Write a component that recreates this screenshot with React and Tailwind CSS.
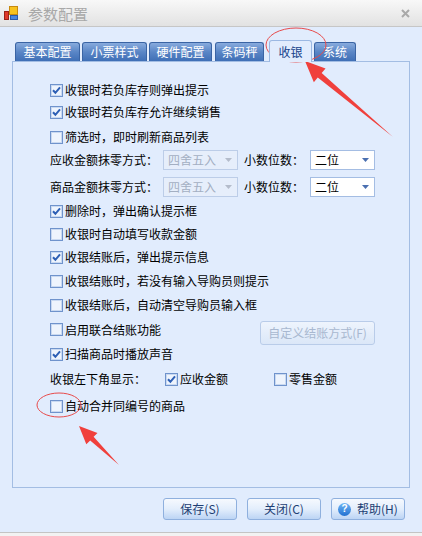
import React from "react";

function Box({ checked }) {
  return (
    <svg width="13" height="13" viewBox="0 0 13 13" className="shrink-0">
      <rect x="0.5" y="0.5" width="12" height="12" fill="#ffffff" stroke="#6f93cc" />
      <rect x="1.5" y="1.5" width="10" height="10" fill="#eef4fd" stroke="#c9d9f1" />
      {checked && (
        <path d="M3 6.2 L5.4 8.8 L10 3.4" fill="none" stroke="#2d5fb5" strokeWidth="2" />
      )}
    </svg>
  );
}

function CheckRow({ checked, children, className = "" }) {
  return (
    <div className={"flex items-center h-[20px] " + className}>
      <Box checked={checked} />
      <span className="ml-[2px] leading-[14px] text-black">{children}</span>
    </div>
  );
}

function Arrow({ color }) {
  return (
    <svg width="7" height="4" viewBox="0 0 7 4">
      <path d="M0 0 H7 L3.5 4 Z" fill={color} />
    </svg>
  );
}

function Tab({ children, w, ml, selected }) {
  if (selected) {
    return (
      <div
        className={`${w} ${ml} h-[22px] relative z-10 flex items-center justify-center rounded-t-[3px] border border-b-0 border-[#9bb8e3] bg-[#e1ecfd] text-[#15428b] pt-[1px]`}
      >
        {children}
      </div>
    );
  }
  return (
    <div
      className={`${w} ${ml} h-[19px] mb-[1px] flex items-center justify-center rounded-t-[3px] border border-b-0 border-[#3a64a4] bg-gradient-to-b from-[#88abdd] via-[#5a86c6] to-[#3f6fb6] text-white`}
    >
      {children}
    </div>
  );
}

function Btn({ children, icon }) {
  return (
    <div className="w-[74px] h-[22px] rounded-[3px] border border-[#8fb0de] bg-gradient-to-b from-[#f6f9fe] via-[#e3eefc] to-[#bcd4f4] flex items-center justify-center text-[#1e3f73] leading-[14px]">
      {icon && (
        <span className="w-[13px] h-[13px] mr-[6px] rounded-full bg-gradient-to-b from-[#6fb6f5] to-[#1f6fd0] text-white text-[10px] font-bold flex items-center justify-center leading-none font-['Liberation_Sans',sans-serif]">
          ?
        </span>
      )}
      {children}
    </div>
  );
}

export default function App() {
  return (
    <div className="w-[422px] h-[536px] relative overflow-hidden bg-[#e1ecfd] text-[12px] font-['Noto_Sans_CJK_SC',sans-serif]">
      {/* title bar */}
      <div className="h-[27px] flex items-center border-b border-[#c6c6c6] bg-gradient-to-b from-[#f8f8f8] to-[#e2e2e2]">
        <svg width="16" height="16" viewBox="0 0 16 16" className="ml-[3px]">
          <rect x="6.5" y="1.5" width="8" height="8" fill="#f7c21e" stroke="#c78a10" />
          <rect x="1.5" y="6.5" width="4" height="8" fill="#e03a2a" stroke="#9a2218" />
          <rect x="7.5" y="10.5" width="7" height="4" fill="#4a86e0" stroke="#2b5aa8" />
        </svg>
        <span className="ml-[9px] text-[15px] text-[#a8a8a8] leading-none">参数配置</span>
        <svg width="9" height="9" viewBox="0 0 9 9" className="ml-auto mr-[12px]">
          <path d="M1 1 L8 8 M8 1 L1 8" stroke="#a9a9a9" strokeWidth="2" />
        </svg>
      </div>

      {/* tabs */}
      <div className="h-[35px] flex items-end pl-[15px]">
        <Tab w="w-[65px]" ml="ml-0">基本配置</Tab>
        <Tab w="w-[65px]" ml="ml-[2px]">小票样式</Tab>
        <Tab w="w-[63px]" ml="ml-[2px]">硬件配置</Tab>
        <Tab w="w-[49px]" ml="ml-[3px]">条码秤</Tab>
        <Tab w="w-[43px]" ml="ml-[5px]" selected>收银</Tab>
        <Tab w="w-[42px]" ml="ml-[2px]">系统</Tab>
      </div>

      {/* panel */}
      <div className="-mt-[1px] ml-[12px] w-[398px] h-[427px] border border-[#a3bde3] pl-[37px] pt-[18px]">
        <CheckRow checked>收银时若负库存则弹出提示</CheckRow>
        <CheckRow checked className="mt-[2px]">收银时若负库存允许继续销售</CheckRow>
        <CheckRow className="mt-[5px]">筛选时，即时刷新商品列表</CheckRow>

        <div className="flex items-center h-[20px] mt-[3px]">
          <span className="w-[113px] leading-[14px]">应收金额抹零方式：</span>
          <div className="w-[75px] h-[20px] border border-[#bccde8] bg-[#e6eefb] flex items-center pl-[4px] pr-[5px] text-[#a3afc2]">
            <span className="leading-[14px]">四舍五入</span>
            <span className="ml-auto"><Arrow color="#b4bccb" /></span>
          </div>
          <span className="ml-[6px] w-[66px] leading-[14px]">小数位数：</span>
          <div className="w-[65px] h-[20px] border border-[#a4bde3] bg-white flex items-center pl-[4px] pr-[5px]">
            <span className="leading-[14px]">二位</span>
            <span className="ml-auto"><Arrow color="#4a6fb0" /></span>
          </div>
        </div>

        <div className="flex items-center h-[20px] mt-[7px]">
          <span className="w-[113px] leading-[14px]">商品金额抹零方式：</span>
          <div className="w-[75px] h-[20px] border border-[#bccde8] bg-[#e6eefb] flex items-center pl-[4px] pr-[5px] text-[#a3afc2]">
            <span className="leading-[14px]">四舍五入</span>
            <span className="ml-auto"><Arrow color="#b4bccb" /></span>
          </div>
          <span className="ml-[6px] w-[66px] leading-[14px]">小数位数：</span>
          <div className="w-[65px] h-[20px] border border-[#a4bde3] bg-white flex items-center pl-[4px] pr-[5px]">
            <span className="leading-[14px]">二位</span>
            <span className="ml-auto"><Arrow color="#4a6fb0" /></span>
          </div>
        </div>

        <CheckRow checked className="mt-[4px]">删除时，弹出确认提示框</CheckRow>
        <CheckRow className="mt-[3px]">收银时自动填写收款金额</CheckRow>
        <CheckRow checked className="mt-[3px]">收银结账后，弹出提示信息</CheckRow>
        <CheckRow className="mt-[4px]">收银结账时，若没有输入导购员则提示</CheckRow>
        <CheckRow className="mt-[4px]">收银结账后，自动清空导购员输入框</CheckRow>

        <div className="flex items-center h-[25px] mt-[2px]">
          <div className="w-[210px] flex items-center">
            <Box />
            <span className="ml-[2px] leading-[14px]">启用联合结账功能</span>
          </div>
          <div className="w-[115px] h-[24px] mt-[6px] rounded-[3px] border border-[#b9cce9] bg-gradient-to-b from-[#eef4fd] to-[#dbe7f8] flex items-center justify-center text-[#a8b8d0] leading-[14px]">
            自定义结账方式(F)
          </div>
        </div>

        <CheckRow checked className="mt-[2px]">扫描商品时播放声音</CheckRow>

        <div className="flex items-center h-[20px] mt-[5px]">
          <span className="w-[115px] leading-[14px]">收银左下角显示：</span>
          <div className="w-[109px] flex items-center">
            <Box checked />
            <span className="ml-[2px] leading-[14px]">应收金额</span>
          </div>
          <div className="flex items-center">
            <Box />
            <span className="ml-[2px] leading-[14px]">零售金额</span>
          </div>
        </div>

        <CheckRow className="mt-[7px]">自动合并同编号的商品</CheckRow>
      </div>

      {/* buttons */}
      <div className="flex mt-[10px] pl-[163px] gap-[10px]">
        <Btn>保存(S)</Btn>
        <Btn>关闭(C)</Btn>
        <Btn icon>帮助(H)</Btn>
      </div>

      <div className="absolute left-0 right-0 bottom-0 h-[4px] border-t border-[#c4c4c4] bg-[#f2f2f2]" />

      {/* red annotations */}
      <svg width="422" height="536" className="absolute left-0 top-0 pointer-events-none">
        <ellipse cx="296" cy="45" rx="30" ry="17" fill="none" stroke="#e84a4a" strokeWidth="1" />
        <polygon
          points="393,137 317.75,77.58 313.85,82.14 305,61 325.55,68.46 321.65,73.02"
          fill="#f0403c"
        />
        <ellipse cx="59" cy="405" rx="22" ry="12" fill="none" stroke="#e84a4a" strokeWidth="1" />
        <polygon
          points="119,465 90.2,440.4 86.3,444.3 79,426 97.5,432.9 93.6,436.8"
          fill="#f0403c"
        />
      </svg>
    </div>
  );
}
